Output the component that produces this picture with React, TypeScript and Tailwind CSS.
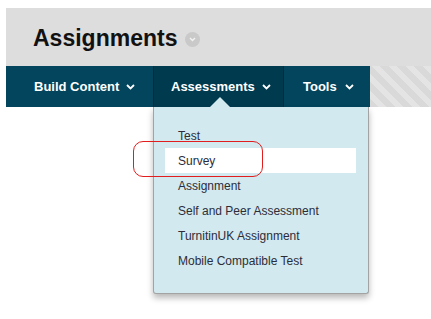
const items = ['Test', 'Survey', 'Assignment', 'Self and Peer Assessment', 'TurnitinUK Assignment', 'Mobile Compatible Test']

function Chevron({ className = '' }: { className?: string }) {
  return (
    <svg width="9" height="6" viewBox="0 0 9 6" className={className}>
      <path d="M1 1 L4.5 4.5 L8 1" fill="none" stroke="white" strokeWidth="1.8" />
    </svg>
  )
}

export default function App() {
  return (
    <div className="relative w-[431px] h-[319px] bg-white overflow-hidden font-['Liberation_Sans',Arial,sans-serif]">
      {/* page header */}
      <div className="mt-[8px] ml-[6px] h-[58px] bg-[#dddddd] flex items-center pl-[27px] pt-[3px]">
        <h1 className="text-[23px] font-bold text-[#111] leading-none">Assignments</h1>
        <span className="ml-[8px] mt-[2px] w-[15px] h-[15px] rounded-full bg-[#c9c9c9] flex items-center justify-center">
          <svg width="7" height="5" viewBox="0 0 7 5">
            <path d="M1 1 L3.5 3.5 L6 1" fill="none" stroke="#f2f2f2" strokeWidth="1.4" />
          </svg>
        </span>
      </div>

      {/* action bar */}
      <div className="ml-[6px] flex h-[41px]">
        <div className="flex bg-[#02455c] text-white text-[13px] font-bold">
          <div className="w-[147px] pl-[28px] flex items-center gap-[7px]">
            <span>Build Content</span>
            <Chevron />
          </div>
          <div className="w-[131px] pl-[17px] flex items-center gap-[7px] bg-[#003a4f] border-x border-[#022c3b]">
            <span>Assessments</span>
            <Chevron />
          </div>
          <div className="w-[86px] pl-[19px] flex items-center gap-[8px]">
            <span>Tools</span>
            <Chevron />
          </div>
        </div>
        <div className="flex-1 bg-[repeating-linear-gradient(45deg,#d9d9d9_0_6px,#e4e4e4_6px_12px)]" />
      </div>

      {/* dropdown menu */}
      <div className="absolute left-[153px] top-[107px] w-[216px] h-[187px] bg-[#d1e9ef] border border-t-0 border-[#a3a3a3] rounded-b-[3px] shadow-[0_4px_6px_rgba(0,0,0,0.28)] pt-[16px]">
        <svg width="20" height="10" viewBox="0 0 20 10" className="absolute -top-[10px] left-[56px]">
          <polygon points="0,10 10,0 20,10" fill="#d1e9ef" />
        </svg>
        <ul className="text-[12px] text-[#2d2d3a]">
          {items.map((item) => (
            <li
              key={item}
              className={`ml-[11px] mr-[12px] h-[25px] pl-[13px] flex items-center ${item === 'Survey' ? 'bg-white' : ''}`}
            >
              {item}
            </li>
          ))}
        </ul>
      </div>

      {/* annotation */}
      <div className="absolute left-[133px] top-[141px] w-[130px] h-[36px] border border-[#e21d1d] rounded-[10px]" />
    </div>
  )
}
